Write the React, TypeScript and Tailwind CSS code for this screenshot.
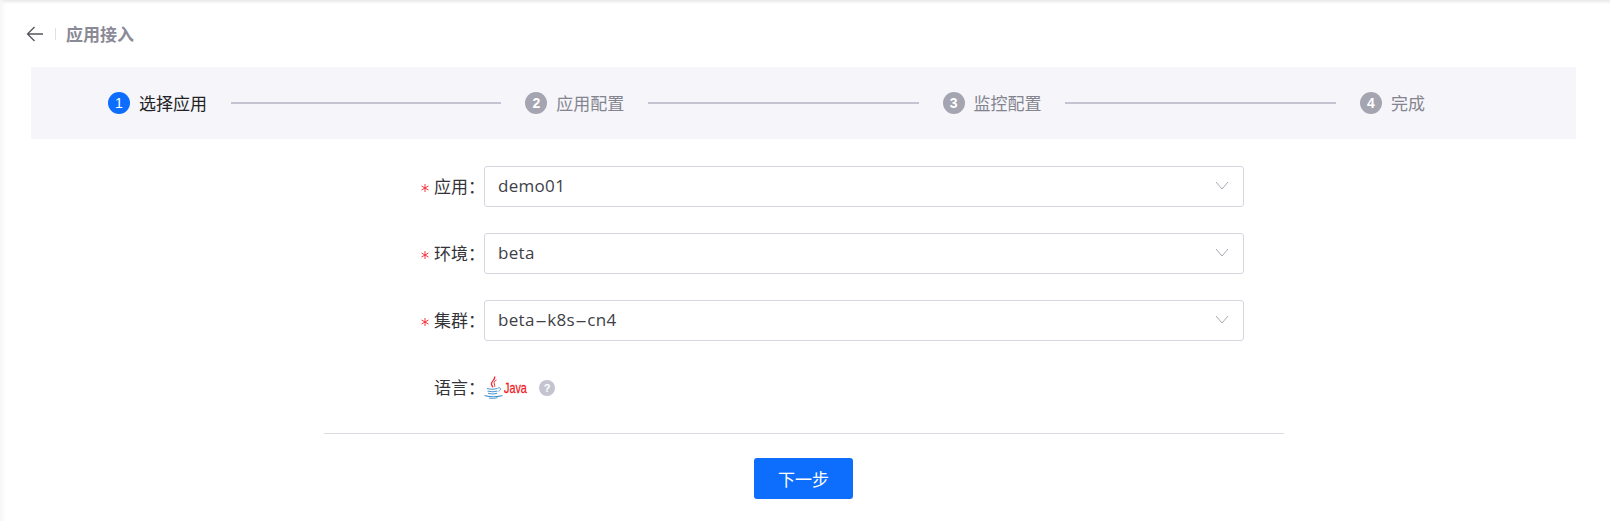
import React from "react";

function Step({ n, label, active, line }: { n: number; label: string; active?: boolean; line?: boolean }) {
  return (
    <div className={line ? "flex items-center w-[417.3px] shrink-0" : "flex items-center shrink-0"}>
      <span
        className={
          active
            ? "w-[22px] h-[22px] rounded-full bg-[#0d6efd] text-white text-[14px] font-['Liberation_Sans'] flex items-center justify-center shrink-0"
            : "w-[22px] h-[22px] rounded-full bg-[#a5a5b2] text-white text-[14px] font-bold font-['Liberation_Sans'] flex items-center justify-center shrink-0"
        }
      >
        {n}
      </span>
      <span className={active ? "ml-[9px] text-[17px] leading-[22px] text-[#222226] shrink-0" : "ml-[9px] text-[17px] leading-[22px] text-[#84848f] shrink-0"}>
        {label}
      </span>
      {line && <span className="ml-[23.5px] mr-[24px] h-[2px] flex-1 bg-[#c4c4d0]" />}
    </div>
  );
}

function Asterisk() {
  return (
    <svg width="8" height="8" viewBox="0 0 8 8" stroke="#f5222d" strokeWidth="0.9" className="mr-[5px] mt-[5px] shrink-0">
      <path d="M4 0v8M.5 2l7 4M.5 6l7-4" />
    </svg>
  );
}

function Field({ label, value }: { label: string; value: string }) {
  const parts = value.split("-");
  return (
    <div className="flex items-center h-[41px] mb-[26px]">
      <label className="w-[484px] shrink-0 flex justify-end items-center text-[17px] text-[#333338] pr-[1px] -mt-[2px]">
        <Asterisk />
        {label}
        <span className="w-[15px]">：</span>
      </label>
      <div className="w-[760px] h-[41px] border border-[#d6d6de] rounded-[3px] bg-white flex items-center justify-between pl-[13px] pr-[14px]">
        <span className="text-[17px] tracking-[0.3px] text-[#404047] font-['Open_Sans',_'Noto_Sans_CJK_SC',_sans-serif] -mt-[1px]">
          {parts.map((part, i) => (
            <React.Fragment key={part}>
              {i > 0 && <span className="inline-block w-[12.5px] text-center scale-x-[2.2]">-</span>}
              {part}
            </React.Fragment>
          ))}
        </span>
        <svg width="14" height="9" viewBox="0 0 14 9" fill="none" stroke="#a8a8b4" strokeWidth="1" className="-mt-[2px]">
          <path d="M1 1l6 7 6-7" />
        </svg>
      </div>
    </div>
  );
}

function JavaLogo() {
  return (
    <svg width="19" height="23" viewBox="0 0 19 23" fill="none" className="-mt-[1px] shrink-0">
      <path d="M10.500 .5C12 3.500 6.500 5.500 7.500 8.500c.3 1 1 1.500 1.200 2.800" stroke="#e8343a" strokeWidth="1.400" />
      <path d="M12.500 4c-2 1-3 2.500-2.200 4 .3.700.6 1.400.5 2.800" stroke="#e8343a" strokeWidth="1" />
      <path d="M3 12.500c3 .8 8 .8 10.500-.2" stroke="#4d97d1" strokeWidth="1.200" />
      <path d="M3.500 15c3 .8 7.500 .8 10 0" stroke="#4d97d1" strokeWidth="1.100" />
      <path d="M4 17.300c2.500 .7 7 .7 9 0" stroke="#4d97d1" strokeWidth="1.100" />
      <path d="M14 12c2.800-.8 4 1.800.5 3.200" stroke="#4d97d1" strokeWidth="1" />
      <path d="M.5 19.500c4 1.600 14 1.600 18 0" stroke="#4d97d1" strokeWidth="1.100" />
      <path d="M5 22c2.500.5 6 .4 8.500-.4" stroke="#4d97d1" strokeWidth="1" />
    </svg>
  );
}

export default function App() {
  return (
    <div className="w-[1610px] h-[521px] overflow-hidden font-['Noto_Sans_CJK_SC',_'Noto_Sans',_sans-serif] bg-[linear-gradient(to_bottom,#e8e8ea_0px,#ffffff_4px)]">
      <div className="h-full pl-[31px] pr-[34px] pt-[22px] bg-[linear-gradient(to_right,#f6f6f7_0px,#ffffff00_6px)]">
        <header className="flex items-center h-[24px] mb-[21px] -ml-[5px]">
          <svg width="18" height="16" viewBox="0 0 18 16" fill="none" stroke="#55555c" strokeWidth="1.3">
            <path d="M17 8H1.500M8.500 1L1.500 8l7 7" />
          </svg>
          <span className="w-px h-[12px] bg-[#e0e0e6] ml-[11px]" />
          <h1 className="ml-[10px] text-[17px] font-bold text-[#8a8a96]">应用接入</h1>
        </header>

        <div className="h-[72px] bg-[#f5f5fa] flex items-center pl-[77px] mb-[27px]">
          <Step n={1} label="选择应用" active line />
          <Step n={2} label="应用配置" line />
          <Step n={3} label="监控配置" line />
          <Step n={4} label="完成" />
        </div>

        <div className="-ml-[31px]">
          <Field label="应用" value="demo01" />
          <Field label="环境" value="beta" />
          <Field label="集群" value="beta-k8s-cn4" />
          <div className="flex items-center h-[24px] mt-[35px]">
            <label className="w-[484px] shrink-0 flex justify-end text-[17px] text-[#333338] pr-[1px] -mt-[2px]">
              语言<span className="w-[15px]">：</span>
            </label>
            <JavaLogo />
            <span className="ml-[1px] w-[23px] text-[15px] font-normal [-webkit-text-stroke:0.3px_#ee1c25] text-[#ee1c25] font-['Liberation_Sans'] scale-x-[0.72] origin-left">Java</span>
            <span className="ml-[12px] w-[16px] h-[16px] rounded-full bg-[#c4c4d0] text-white text-[11px] font-bold flex items-center justify-center font-['Liberation_Sans']">?</span>
          </div>
          <div className="ml-[324px] w-[960px] h-px bg-[#dcdce2] mt-[33px]" />
          <div className="ml-[754px] mt-[24px]">
            <button className="w-[99px] h-[41px] rounded-[3px] bg-[#0d6efd] text-white text-[17px]">下一步</button>
          </div>
        </div>
      </div>
    </div>
  );
}
